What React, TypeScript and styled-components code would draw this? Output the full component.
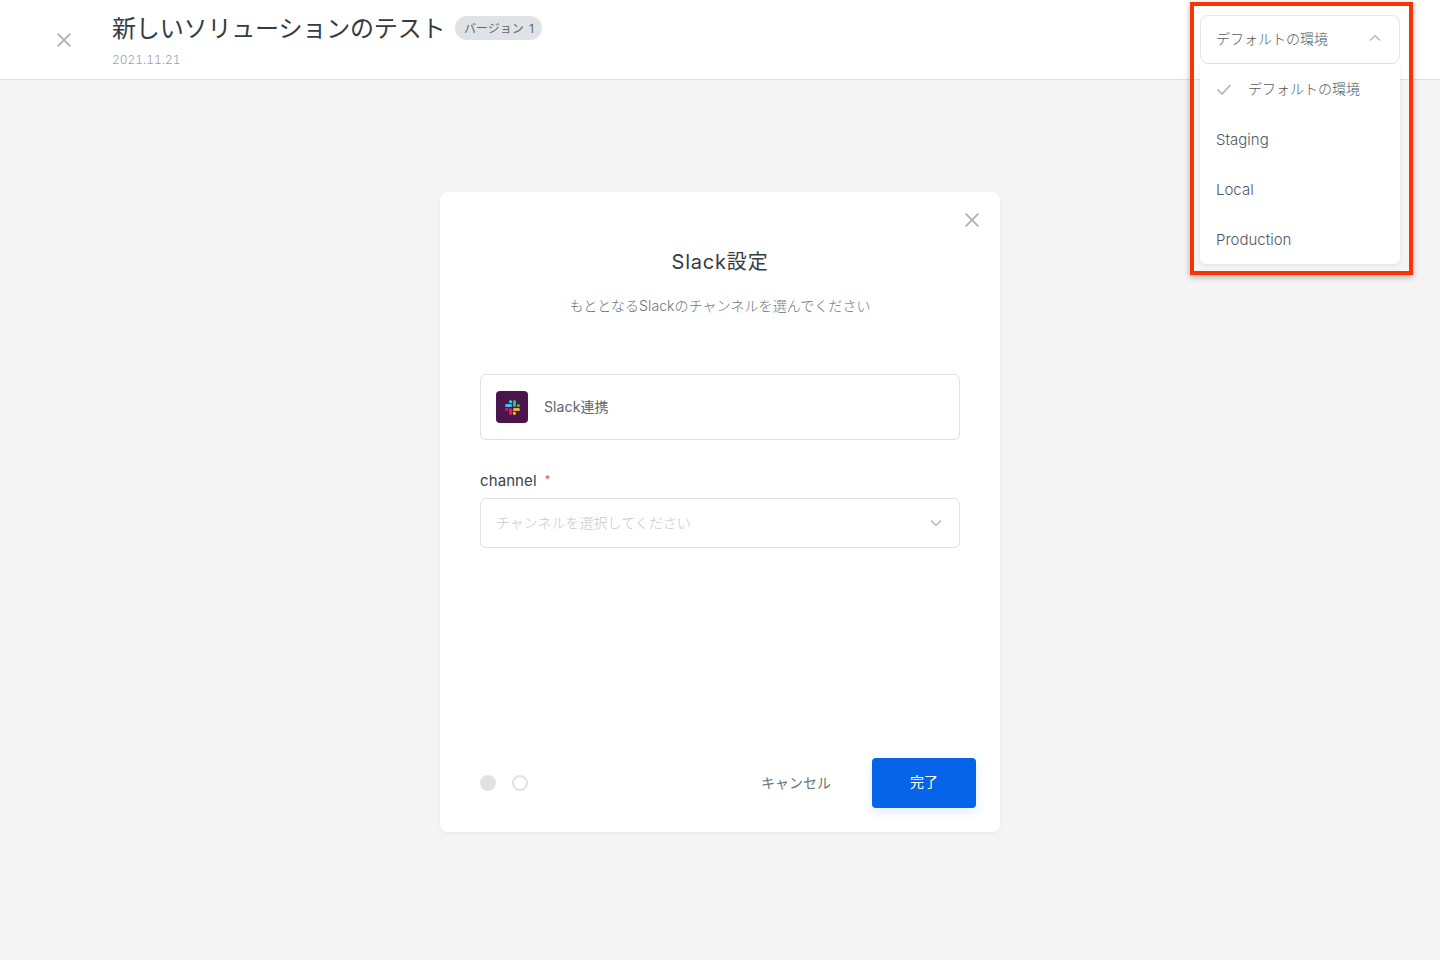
import React from "react";
import styled, { createGlobalStyle } from "styled-components";

const Global = createGlobalStyle`
  html, body { margin: 0; padding: 0; }
  body { font-family: Inter, "Noto Sans CJK JP", sans-serif; background: #f4f4f4; color: #3a4249; }
  * { box-sizing: border-box; }
`;

const Page = styled.div`
  position: relative;
  width: 1440px;
  height: 960px;
  overflow: hidden;
  display: flex;
  flex-direction: column;
  background: #f4f4f4;
`;

const Header = styled.header`
  height: 80px;
  flex: none;
  display: flex;
  align-items: flex-start;
  background: #fff;
  border-bottom: 1px solid #dfe1e3;
`;

const HeaderClose = styled.div`
  width: 112px;
  height: 79px;
  flex: none;
  display: flex;
  align-items: center;
  padding-left: 57px;
  color: #aab2ba;
`;

const TitleBlock = styled.div`
  display: flex;
  flex-direction: column;
  padding-top: 12px;
`;

const TitleRow = styled.div`
  display: flex;
  align-items: center;
  gap: 10px;
`;

const Title = styled.h1`
  margin: 0;
  font-size: 24px;
  line-height: 34px;
  font-weight: 400;
  letter-spacing: -0.15px;
  color: #343c43;
`;

const Badge = styled.span`
  display: inline-flex;
  align-items: center;
  justify-content: center;
  width: 87px;
  height: 24px;
  margin-top: -2px;
  padding-bottom: 1px;
  border-radius: 12px;
  background: #dfe3e6;
  font-size: 12px;
  word-spacing: 2px;
  color: #5f6870;
  white-space: pre;
`;

const DateText = styled.div`
  margin-top: 4px;
  font-size: 12px;
  line-height: 20px;
  font-weight: 300;
  font-variant-numeric: tabular-nums;
  color: #9aa1a8;
`;

const Main = styled.main`
  flex: 1;
  display: flex;
  justify-content: center;
  padding-top: 112px;
`;

const Modal = styled.section`
  position: relative;
  width: 560px;
  height: 640px;
  display: flex;
  flex-direction: column;
  padding: 0 40px;
  border-radius: 8px;
  background: #fff;
  box-shadow: 0 1px 4px rgba(0, 0, 0, 0.05);
`;

const ModalClose = styled.div`
  position: absolute;
  top: 16px;
  right: 16px;
  width: 24px;
  height: 24px;
  display: flex;
  align-items: center;
  justify-content: center;
  color: #aab2ba;
`;

const ModalTitle = styled.h2`
  margin: 56px 0 0;
  font-size: 20px;
  line-height: 28px;
  font-weight: 400;
  letter-spacing: 0.8px;
  text-align: center;
  color: #343c43;
`;

const ModalSub = styled.p`
  margin: 20px 0 0;
  font-size: 14px;
  line-height: 20px;
  font-weight: 300;
  letter-spacing: 0.08px;
  text-align: center;
  color: #6c747b;
`;

const SlackCard = styled.div`
  margin-top: 58px;
  height: 66px;
  display: flex;
  align-items: center;
  gap: 16px;
  padding: 0 15px;
  border: 1px solid #dfe1e3;
  border-radius: 6px;
  font-size: 14px;
  letter-spacing: 0.1px;
  color: #5d656c;
`;

const SlackName = styled.span`
  padding-bottom: 2px;
`;

const SlackLogo = styled.div`
  width: 32px;
  height: 32px;
  display: flex;
  align-items: center;
  justify-content: center;
  border-radius: 4px;
  background: #4a154b;
`;

const FieldLabel = styled.label`
  margin-top: 30px;
  display: flex;
  align-items: flex-start;
  gap: 8px;
  font-size: 15px;
  line-height: 22px;
  letter-spacing: 0.1px;
  color: #3a4249;
`;

const Required = styled.span`
  font-size: 11px;
  line-height: 18px;
  color: #d9534f;
`;

const SelectBox = styled.div`
  margin-top: 6px;
  height: 50px;
  display: flex;
  align-items: center;
  justify-content: space-between;
  padding: 0 17px 0 16px;
  border: 1px solid #dfe1e3;
  border-radius: 6px;
  font-size: 14px;
  font-weight: 300;
  color: #c5c9cd;
`;

const Placeholder = styled.span`
  margin-left: -1px;
  padding-bottom: 2px;
`;

const Chevron = styled.span`
  display: flex;
  color: #aab2ba;
`;

const Footer = styled.div`
  position: absolute;
  left: 40px;
  right: 24px;
  bottom: 24px;
  height: 50px;
  display: flex;
  align-items: center;
`;

const Dots = styled.div`
  display: flex;
  gap: 16px;
  flex: 1;
`;

const Dot = styled.span<{ $filled?: boolean }>`
  width: 16px;
  height: 16px;
  border-radius: 50%;
  background: ${(p) => (p.$filled ? "#dfe3e6" : "#fff")};
  border: ${(p) => (p.$filled ? "none" : "2px solid #dfe3e6")};
`;

const CancelButton = styled.button`
  width: 100px;
  margin-right: 26px;
  padding: 0 0 2px;
  border: none;
  background: none;
  font: inherit;
  font-size: 14px;
  color: #6a7279;
`;

const DoneButton = styled.button`
  width: 104px;
  height: 50px;
  padding: 0 0 4px;
  border: none;
  border-radius: 4px;
  background: #0564e8;
  color: #fff;
  font: inherit;
  font-size: 14px;
  box-shadow: 0 4px 12px rgba(5, 100, 232, 0.12);
`;

const Highlight = styled.div`
  position: absolute;
  top: 2px;
  left: 1190px;
  width: 223px;
  height: 273px;
  border: 4px solid #f93308;
  box-shadow: 0 2px 6px rgba(0, 0, 0, 0.3);
  pointer-events: none;
`;

const Dropdown = styled.div`
  position: absolute;
  top: 15px;
  left: 1200px;
  width: 200px;
  display: flex;
  flex-direction: column;
`;

const DropdownHead = styled.div`
  height: 49px;
  display: flex;
  align-items: center;
  justify-content: space-between;
  padding: 0 18px 3px 15px;
  border: 1px solid #e3e5e8;
  border-radius: 8px;
  background: #fff;
  font-size: 14px;
  font-weight: 300;
  color: #50585f;
`;

const Menu = styled.ul`
  margin: 0;
  padding: 0;
  list-style: none;
  background: #fff;
  border-radius: 0 0 6px 6px;
  box-shadow: 0 1px 4px rgba(0, 0, 0, 0.08);
`;

const MenuItem = styled.li<{ $latin?: boolean }>`
  height: 50px;
  display: flex;
  align-items: center;
  gap: 16px;
  padding: 0 16px ${(p) => (p.$latin ? "0" : "2px")};
  font-size: ${(p) => (p.$latin ? "15px" : "14px")};
  font-weight: 300;
  color: #50585f;
`;

const CheckMark = styled.svg`
  margin-top: 2px;
`;

const Cross = () => (
  <svg width="14" height="14" viewBox="0 0 14 14" fill="none" stroke="currentColor" strokeWidth="1.9" aria-hidden="true">
    <path d="M0.7 0.7 13.3 13.3M13.3 0.7 0.7 13.3" />
  </svg>
);

const ChevronIcon = ({ up }: { up?: boolean }) => (
  <svg width="12" height="8" viewBox="0 0 12 8" fill="none" stroke="currentColor" strokeWidth="1.2" aria-hidden="true">
    <path d={up ? "M1 6.5 6 1.5 11 6.5" : "M1 1.5 6 6.5 11 1.5"} />
  </svg>
);

const SlackMark = () => (
  <svg width="15" height="15" viewBox="0 0 122.8 122.8" aria-hidden="true">
    <path fill="#e01e5a" d="M25.8 77.6a12.9 12.9 0 1 1-12.9-12.9h12.9zM32.3 77.6a12.9 12.9 0 0 1 25.8 0v32.3a12.9 12.9 0 1 1-25.8 0z" />
    <path fill="#36c5f0" d="M45.2 25.8a12.9 12.9 0 1 1 12.9-12.9v12.9zM45.2 32.3a12.9 12.9 0 0 1 0 25.8H12.9a12.9 12.9 0 1 1 0-25.8z" />
    <path fill="#2eb67d" d="M97 45.2a12.9 12.9 0 1 1 12.9 12.9H97zM90.5 45.2a12.9 12.9 0 0 1-25.8 0V12.9a12.9 12.9 0 1 1 25.8 0z" />
    <path fill="#ecb22e" d="M77.6 97a12.9 12.9 0 1 1-12.9 12.9V97zM77.6 90.5a12.9 12.9 0 0 1 0-25.8h32.3a12.9 12.9 0 1 1 0 25.8z" />
  </svg>
);

export default function App() {
  return (
    <Page>
      <Global />
      <Header>
        <HeaderClose>
          <Cross />
        </HeaderClose>
        <TitleBlock>
          <TitleRow>
            <Title>新しいソリューションのテスト</Title>
            <Badge>バージョン 1</Badge>
          </TitleRow>
          <DateText>2021.11.21</DateText>
        </TitleBlock>
      </Header>
      <Main>
        <Modal>
          <ModalClose>
            <Cross />
          </ModalClose>
          <ModalTitle>Slack設定</ModalTitle>
          <ModalSub>もととなるSlackのチャンネルを選んでください</ModalSub>
          <SlackCard>
            <SlackLogo>
              <SlackMark />
            </SlackLogo>
            <SlackName>Slack連携</SlackName>
          </SlackCard>
          <FieldLabel>
            channel
            <Required>*</Required>
          </FieldLabel>
          <SelectBox>
            <Placeholder>チャンネルを選択してください</Placeholder>
            <Chevron>
              <ChevronIcon />
            </Chevron>
          </SelectBox>
          <Footer>
            <Dots>
              <Dot $filled />
              <Dot />
            </Dots>
            <CancelButton>キャンセル</CancelButton>
            <DoneButton>完了</DoneButton>
          </Footer>
        </Modal>
      </Main>
      <Dropdown>
        <DropdownHead>
          デフォルトの環境
          <Chevron>
            <ChevronIcon up />
          </Chevron>
        </DropdownHead>
        <Menu>
          <MenuItem>
            <CheckMark width="16" height="11" viewBox="0 0 16 11" fill="none" stroke="#aab2ba" strokeWidth="1.6" aria-hidden="true">
              <path d="M1.5 5.5 6 10 14.5 1" />
            </CheckMark>
            デフォルトの環境
          </MenuItem>
          <MenuItem $latin>Staging</MenuItem>
          <MenuItem $latin>Local</MenuItem>
          <MenuItem $latin>Production</MenuItem>
        </Menu>
      </Dropdown>
      <Highlight />
    </Page>
  );
}
